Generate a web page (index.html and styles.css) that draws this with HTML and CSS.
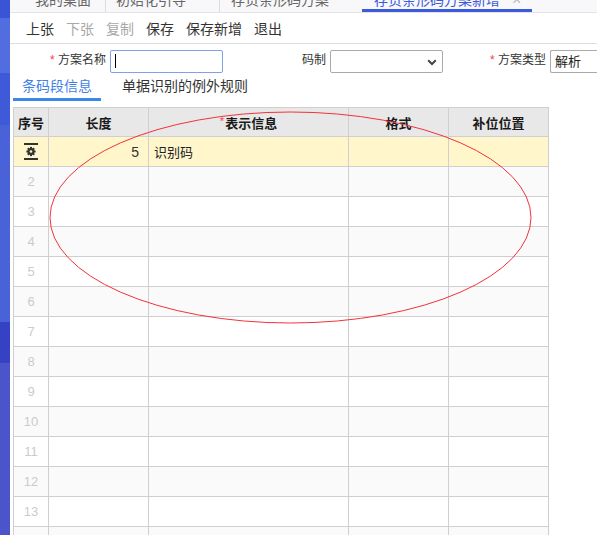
FILE: index.html
```html
<!DOCTYPE html>
<html lang="zh-CN">
<head>
<meta charset="utf-8">
<title>存货条形码方案新增</title>
<link rel="stylesheet" href="styles.css">
</head>
<body>
<div class="app">
  <div class="sidebar"></div>
  <div class="main">
    <div class="tabbar">
      <div class="tab tab-1"><span>我的桌面</span></div>
      <div class="tab tab-2"><span>初始化引导</span></div>
      <div class="tab tab-3"><span>存货条形码方案</span></div>
      <div class="tab tab-active"><span>存货条形码方案新增</span><i class="close">×</i></div>
    </div>
    <div class="toolbar">
      <span class="btn">上张</span>
      <span class="btn disabled">下张</span>
      <span class="btn disabled">复制</span>
      <span class="btn">保存</span>
      <span class="btn">保存新增</span>
      <span class="btn">退出</span>
    </div>
    <div class="form-row">
      <div class="field f1">
        <label class="lbl"><em>*</em> 方案名称</label>
        <div class="ctl ctl-focus"><span class="caret"></span></div>
      </div>
      <div class="field f2">
        <label class="lbl">码制</label>
        <div class="ctl ctl-select">
          <svg class="chev" width="10" height="7" viewBox="0 0 10 7"><path d="M1.2 1.3 L5 5 L8.8 1.3" fill="none" stroke="#444" stroke-width="2"/></svg>
        </div>
      </div>
      <div class="field f3">
        <label class="lbl"><em>*</em> 方案类型</label>
        <div class="ctl ctl-text">解析</div>
      </div>
    </div>
    <div class="subtabs">
      <div class="subtab active">条码段信息</div>
      <div class="subtab">单据识别的例外规则</div>
    </div>
    <div class="grid">
      <div class="row head">
        <div class="c c1">序号</div>
        <div class="c c2">长度</div>
        <div class="c c3"><em>*</em>表示信息</div>
        <div class="c c4">格式</div>
        <div class="c c5">补位位置</div>
      </div>
      <div class="row current">
        <div class="c c1">
          <svg width="14" height="17" viewBox="0 0 14 17">
            <rect x="0" y="0" width="14" height="2" fill="#333"/>
            <rect x="0" y="15" width="14" height="2" fill="#333"/>
            <g fill="#333" transform="translate(7 8.5)">
              <rect x="-1" y="-4.6" width="2" height="9.2"/>
              <rect x="-1" y="-4.6" width="2" height="9.2" transform="rotate(45)"/>
              <rect x="-1" y="-4.6" width="2" height="9.2" transform="rotate(90)"/>
              <rect x="-1" y="-4.6" width="2" height="9.2" transform="rotate(135)"/>
              <circle r="3.4"/>
              <circle r="1.3" fill="#fff7cc"/>
            </g>
          </svg>
        </div>
        <div class="c c2 num">5</div>
        <div class="c c3">识别码</div>
        <div class="c c4"></div>
        <div class="c c5"></div>
      </div>
      <div class="row alt"><div class="c c1 idx">2</div><div class="c c2"></div><div class="c c3"></div><div class="c c4"></div><div class="c c5"></div></div>
      <div class="row"><div class="c c1 idx">3</div><div class="c c2"></div><div class="c c3"></div><div class="c c4"></div><div class="c c5"></div></div>
      <div class="row alt"><div class="c c1 idx">4</div><div class="c c2"></div><div class="c c3"></div><div class="c c4"></div><div class="c c5"></div></div>
      <div class="row"><div class="c c1 idx">5</div><div class="c c2"></div><div class="c c3"></div><div class="c c4"></div><div class="c c5"></div></div>
      <div class="row alt"><div class="c c1 idx">6</div><div class="c c2"></div><div class="c c3"></div><div class="c c4"></div><div class="c c5"></div></div>
      <div class="row"><div class="c c1 idx">7</div><div class="c c2"></div><div class="c c3"></div><div class="c c4"></div><div class="c c5"></div></div>
      <div class="row alt"><div class="c c1 idx">8</div><div class="c c2"></div><div class="c c3"></div><div class="c c4"></div><div class="c c5"></div></div>
      <div class="row"><div class="c c1 idx">9</div><div class="c c2"></div><div class="c c3"></div><div class="c c4"></div><div class="c c5"></div></div>
      <div class="row alt"><div class="c c1 idx">10</div><div class="c c2"></div><div class="c c3"></div><div class="c c4"></div><div class="c c5"></div></div>
      <div class="row"><div class="c c1 idx">11</div><div class="c c2"></div><div class="c c3"></div><div class="c c4"></div><div class="c c5"></div></div>
      <div class="row alt"><div class="c c1 idx">12</div><div class="c c2"></div><div class="c c3"></div><div class="c c4"></div><div class="c c5"></div></div>
      <div class="row"><div class="c c1 idx">13</div><div class="c c2"></div><div class="c c3"></div><div class="c c4"></div><div class="c c5"></div></div>
      <div class="row alt"><div class="c c1 idx">14</div><div class="c c2"></div><div class="c c3"></div><div class="c c4"></div><div class="c c5"></div></div>
    </div>
  </div>
</div>
<svg class="annotation" width="597" height="535" viewBox="0 0 597 535">
  <ellipse cx="290.5" cy="217.5" rx="240.5" ry="105.5" fill="none" stroke="#f2323c" stroke-width="1"/>
</svg>
</body>
</html>
```
FILE: styles.css
```css
html, body {
  margin: 0;
  padding: 0;
  width: 597px;
  height: 535px;
  overflow: hidden;
  background: #fff;
  font-family: "Liberation Sans", "Noto Sans CJK SC", sans-serif;
  color: #333;
}

.app {
  display: flex;
  width: 597px;
  height: 535px;
  overflow: hidden;
}

.sidebar {
  flex: 0 0 10px;
  height: 535px;
  background: linear-gradient(to bottom,
    #3a54d8 0, #3a54d8 18px,
    #526de0 18px, #526de0 73px,
    #3f5ad9 73px, #3f5ad9 125px,
    #4a62d7 125px, #4a62d7 322px,
    #3442c3 322px, #3442c3 363px,
    #4b55c9 363px, #4b55c9 535px);
}

.main {
  flex: 1;
  min-width: 0;
  display: flex;
  flex-direction: column;
  overflow: hidden;
}
.main > * {
  flex-shrink: 0;
}

/* top tabs (cut off at the top edge) */
.tabbar {
  display: flex;
  height: 12px;
  overflow: hidden;
  background: #f8f8fa;
  border-bottom: 1px solid #e4e4e8;
  font-size: 14px;
  line-height: 14px;
  color: #666;
}
.tab {
  box-sizing: border-box;
  height: 12px;
  white-space: nowrap;
  flex: 0 0 auto;
}
.tab span, .tab .close {
  display: inline-block;
  margin-top: -7px;
  vertical-align: top;
}
.tab-1 { width: 96px; padding-left: 25px; border-right: 1px solid #dcdce0; }
.tab-2 { width: 114px; padding-left: 10px; border-right: 1px solid #dcdce0; }
.tab-3 { width: 142px; padding-left: 11px; }
.tab-active {
  width: 170px;
  padding-left: 12px;
  color: #3d5bd9;
  border-bottom: 3px solid #3b5bdb;
}
.tab-active .close {
  font-style: normal;
  color: #bbb;
  margin-left: 12px;
  font-size: 16px;
}

/* toolbar */
.toolbar {
  display: flex;
  gap: 12px;
  height: 30px;
  align-items: center;
  padding-left: 16px;
  border-bottom: 1px solid #dedede;
  font-size: 14px;
  color: #333;
}
.btn.disabled { color: #a8a8a8; }

/* form */
.form-row {
  display: flex;
  padding-top: 4px;
  height: 30px;
  box-sizing: border-box;
  white-space: nowrap;
}
.field {
  display: flex;
  align-items: center;
  gap: 4px;
  flex: 0 0 auto;
}
.lbl {
  box-sizing: border-box;
  text-align: right;
  font-size: 12px;
  line-height: 20px;
  margin-top: -2px;
  color: #333;
}
.lbl em {
  font-style: normal;
  color: #f5434e;
}
.f1 .lbl { width: 96px; }
.f2 .lbl { width: 103px; }
.f3 .lbl { width: 103px; }

.ctl {
  box-sizing: border-box;
  width: 113px;
  height: 23px;
  border: 1px solid #aaa;
  border-radius: 2px;
  background: #fff;
  position: relative;
  font-size: 13px;
  line-height: 21px;
  color: #222;
}
.ctl-focus {
  border-color: #7fa2e6;
}
.caret {
  display: block;
  width: 1px;
  height: 14px;
  background: #000;
  margin: 3px 0 0 4px;
}
.ctl-select .chev {
  position: absolute;
  right: 5px;
  top: 8px;
}
.ctl-text {
  padding-left: 4px;
  border-right: none;
}

/* sub tabs */
.subtabs {
  display: flex;
  gap: 12px;
  margin-left: 3px;
  margin-top: 0;
  height: 27px;
  box-sizing: border-box;
  font-size: 14px;
  color: #333;
}
.subtab {
  padding: 0 9px;
  line-height: 24px;
  height: 27px;
  box-sizing: border-box;
}
.subtab.active {
  color: #3f7fe6;
  border-bottom: 3px solid #3a88ea;
}

/* grid */
.grid {
  margin-top: 6px;
  margin-left: 3px;
  width: 536px;
  box-sizing: border-box;
  border-top: 1px solid #cfcfcf;
  border-left: 1px solid #cfcfcf;
}
.row {
  display: flex;
  height: 30px;
}
.row.head {
  height: 29px;
  background: #e8e8e8;
  font-weight: bold;
  color: #1a1a1a;
  font-size: 13px;
}
.row.current { background: #fff6cc; }
.row.alt { background: #fafafa; }
.c {
  box-sizing: border-box;
  height: 100%;
  border-right: 1px solid #cfcfcf;
  border-bottom: 1px solid #cfcfcf;
  display: flex;
  align-items: center;
  font-size: 13px;
  flex: 0 0 auto;
}
.head .c { justify-content: center; }
.head .c em {
  font-style: normal;
  font-weight: normal;
  color: #f5434e;
  font-size: 11px;
  align-self: flex-start;
  margin-top: 7px;
  margin-right: 1px;
}
.c1 { width: 35px; justify-content: center; }
.c2 { width: 100px; }
.c3 { width: 200px; padding-left: 5px; }
.c4 { width: 100px; }
.c5 { width: 100px; }
.head .c3 { padding-left: 0; }
.num {
  justify-content: flex-end;
  padding-right: 9px;
  font-size: 14px;
}
.idx {
  color: #cbcbcb;
  font-size: 13px;
}
.current .c3 { font-size: 13px; color: #222; }

.annotation {
  position: absolute;
  left: 0;
  top: 0;
  pointer-events: none;
}
```
